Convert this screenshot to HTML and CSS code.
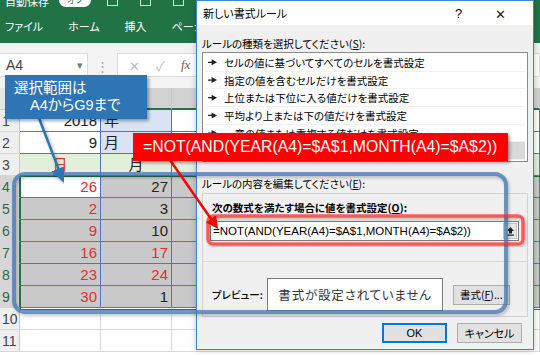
FILE: index.html
```html
<!DOCTYPE html>
<html lang="ja">
<head>
  <meta charset="UTF-8">
  <meta name="viewport" content="width=device-width, initial-scale=1.0">
  <title>新しい書式ルール</title>
  <link rel="stylesheet" href="styles.css">
</head>
<body>
  <div class="excel">
    <div class="title-strip">
      <span class="autosave">自動保存</span>
      <span class="toggle">オフ</span>
      <span class="qa"></span><span class="qa"></span><span class="qa"></span>
    </div>
    <nav class="tabs">
      <span>ファイル</span>
      <span>ホーム</span>
      <span>挿入</span>
      <span>ページレイアウト</span>
    </nav>
    <div class="formula-bar">
      <div class="name-box">A4<span class="caret">▾</span></div>
      <div class="grip">⋮</div>
      <div class="fx-box">
        <span class="fx-btn">✕</span>
        <span class="fx-btn">✓</span>
        <span class="fx">fx</span>
      </div>
    </div>

    <!-- sheet: row header + columns A, B, C -->
    <div class="sheet">
      <div class="hd corner"></div><div class="hd col">A</div><div class="hd col">B</div><div class="hd col">C</div>

      <div class="rh">1</div><div class="c num">2018</div><div class="c yr">年</div><div class="c"></div>
      <div class="rh">2</div><div class="c num">9</div><div class="c yr">月</div><div class="c"></div>
      <div class="rh">3</div><div class="c wk red mid">日</div><div class="c wk mid">月</div><div class="c wk"></div>

      <div class="rh on">4</div><div class="c num red">26</div><div class="c sel num">27</div><div class="c sel"></div>
      <div class="rh on">5</div><div class="c sel num red">2</div><div class="c sel num">3</div><div class="c sel"></div>
      <div class="rh on">6</div><div class="c sel num red">9</div><div class="c sel num">10</div><div class="c sel"></div>
      <div class="rh on">7</div><div class="c sel num red">16</div><div class="c sel num red">17</div><div class="c sel"></div>
      <div class="rh on">8</div><div class="c sel num red">23</div><div class="c sel num red">24</div><div class="c sel"></div>
      <div class="rh on">9</div><div class="c sel num red">30</div><div class="c sel num">1</div><div class="c sel"></div>

      <div class="rh">10</div><div class="c out"></div><div class="c out"></div><div class="c out"></div>
      <div class="rh">11</div><div class="c out"></div><div class="c out"></div><div class="c out"></div>

      <div class="selection"></div>
    </div>
  </div>

  <div class="dialog">
    <div class="dlg-title">
      <span class="dlg-name">新しい書式ルール</span>
      <span class="dlg-help">?</span>
      <span class="dlg-close">✕</span>
    </div>
    <div class="dlg-body">
      <div class="label">ルールの種類を選択してください(<u>S</u>):</div>
      <ul class="rule-list">
        <li><i class="pt"></i>セルの値に基づいてすべてのセルを書式設定</li>
        <li><i class="pt"></i>指定の値を含むセルだけを書式設定</li>
        <li><i class="pt"></i>上位または下位に入る値だけを書式設定</li>
        <li><i class="pt"></i>平均より上または下の値だけを書式設定</li>
        <li><i class="pt"></i>一意の値または重複する値だけを書式設定</li>
        <li class="picked"><i class="pt"></i>数式を使用して、書式設定するセルを決定</li>
      </ul>
      <div class="label second">ルールの内容を編集してください(<u>E</u>):</div>
      <div class="group">
        <div class="group-head">次の数式を満たす場合に値を書式設定(<u>O</u>):</div>
        <div class="formula-input">
          <span class="formula-text">=NOT(AND(YEAR(A4)=$A$1,MONTH(A4)=$A$2))</span>
          <span class="collapse">
            <svg width="9" height="10" viewBox="0 0 9 10"><path d="M4.5 1 L8 5 H6 V7.5 H3 V5 H1 Z" fill="#222"/><rect x="1" y="8.5" width="7" height="1.2" fill="#222"/></svg>
          </span>
        </div>
        <div class="preview-row">
          <span class="preview-label">プレビュー:</span>
          <span class="preview-box">書式が設定されていません</span>
          <span class="btn">書式(<u>F</u>)...</span>
        </div>
      </div>
      <div class="dlg-actions">
        <span class="btn wide default">OK</span>
        <span class="btn wide">キャンセル</span>
      </div>
    </div>
  </div>

  <svg class="marks" width="540" height="355" viewBox="0 0 540 355">
    <defs>
      <filter id="soft" x="-5%" y="-5%" width="110%" height="115%">
        <feDropShadow dx="1.5" dy="2" stdDeviation="1.5" flood-color="#000" flood-opacity="0.3"/>
      </filter>
      <marker id="blueHead" markerWidth="6" markerHeight="6" refX="4" refY="3" orient="auto" markerUnits="strokeWidth">
        <path d="M0 0 L6 3 L0 6 Z" fill="#2e75b6"/>
      </marker>
      <marker id="redHead" markerWidth="5" markerHeight="5" refX="3.5" refY="2.5" orient="auto" markerUnits="strokeWidth">
        <path d="M0 0 L5 2.5 L0 5 Z" fill="#ff0000"/>
      </marker>
    </defs>
    <rect x="14" y="174" width="492" height="138" rx="11" fill="none" stroke="#3f74b5" stroke-opacity="0.72" stroke-width="4" filter="url(#soft)"/>
    <rect x="208" y="216" width="315" height="28" rx="5" fill="none" stroke="#ff2b2b" stroke-opacity="0.72" stroke-width="3.5" filter="url(#soft)"/>
    <line x1="39" y1="118" x2="62" y2="178" stroke="#2e75b6" stroke-width="2.5" marker-end="url(#blueHead)" filter="url(#soft)"/>
    <line x1="170" y1="160" x2="216" y2="226" stroke="#ff0000" stroke-width="2.5" marker-end="url(#redHead)"/>
  </svg>

  <div class="callout blue-note">
    <div>選択範囲は</div>
    <div class="indent">A4からG9まで</div>
  </div>
  <div class="callout red-note">=NOT(AND(YEAR(A4)=$A$1,MONTH(A4)=$A$2))</div>
</body>
</html>
```

FILE: styles.css
```css
/* Page */
body {
  margin: 0;
  width: 540px;
  height: 355px;
  overflow: hidden;
  position: relative;
  font-family: "Noto Sans CJK JP", "Noto Sans", sans-serif;
  font-feature-settings: "palt";
  background: #ffffff;
  color: #000;
}

/* Excel window behind the dialog */
.excel {
  width: 540px;
}

.title-strip {
  height: 12px;
  background: #217346;
  display: flex;
  align-items: flex-end;
  gap: 10px;
  padding-left: 5px;
  overflow: hidden;
  color: #fff;
  font-size: 11px;
}

.autosave {
  line-height: 12px;
  margin-bottom: 5px;
}

.toggle {
  width: 32px;
  height: 14px;
  margin-bottom: 5px;
  border-radius: 7px;
  background: #fff;
  color: #217346;
  font-size: 9px;
  text-align: center;
  line-height: 14px;
}

.qa {
  width: 9px;
  height: 5px;
  margin: 0 6px 6px;
  border: 1px solid #cfe3d7;
  border-top: none;
}

.tabs {
  height: 31px;
  background: #217346;
  display: flex;
  align-items: center;
  gap: 25px;
  padding: 0 0 4px 5px;
  box-sizing: border-box;
  color: #fff;
  font-size: 11px;
  white-space: nowrap;
}

.formula-bar {
  height: 45px;
  background: #f3f3f3;
  display: flex;
  align-items: center;
  padding-bottom: 1px;
  box-sizing: border-box;
}

.name-box {
  width: 88px;
  height: 24px;
  background: #fff;
  border: 1px solid #dcdcdc;
  border-left: none;
  box-sizing: border-box;
  display: flex;
  align-items: center;
  justify-content: space-between;
  padding: 0 4px 0 6px;
  font-family: "Liberation Sans", sans-serif;
  font-size: 14px;
  color: #444;
}

.caret {
  font-size: 11px;
  color: #777;
}

.grip {
  width: 29px;
  text-align: center;
  color: #aaa;
  font-size: 13px;
}

.fx-box {
  flex: 1;
  height: 24px;
  background: #fff;
  border: 1px solid #dcdcdc;
  box-sizing: border-box;
  display: flex;
  align-items: center;
  gap: 16px;
  padding-left: 11px;
  color: #bbb;
  font-size: 13px;
}

.fx {
  font-style: italic;
  color: #666;
  font-family: "Liberation Serif", serif;
}

/* Grid of cells */
.sheet {
  position: relative;
  display: grid;
  grid-template-columns: 20px 81px 71px 1fr;
  grid-auto-rows: 22px;
  font-family: "Liberation Sans", "Noto Sans CJK JP", sans-serif;
  font-size: 15px;
}

.hd {
  background: #e6e6e6;
  border-right: 1px solid #c8c8c8;
  border-bottom: 1px solid #c8c8c8;
  text-align: center;
  font-size: 12px;
  line-height: 21px;
  color: #444;
}

.hd.col {
  background: #d2d2d2;
  border-bottom: 2px solid #217346;
}

.rh {
  background: #efefef;
  border-right: 1px solid #c8c8c8;
  border-bottom: 1px solid #d6d6d6;
  font-size: 14px;
  line-height: 22px;
  padding-left: 2px;
  color: #444;
}

.rh.on {
  background: #d6d6d6;
  color: #2d6a47;
  border-right: 1px solid #217346;
}

.c {
  background: #fff;
  border-right: 1px solid #4f74c0;
  border-bottom: 1px solid #4f74c0;
  line-height: 22px;
  padding: 0 3px;
  color: #222;
  white-space: nowrap;
  overflow: hidden;
}

.c.num { text-align: right; }
.c.mid { text-align: center; }
.c.red { color: #e0302a; }
.c.yr { background: #dae3f3; }
.c.wk { background: #e2efda; }
.c.sel { background: #c9c9c9; }

.c.out {
  border-right-color: #dadada;
  border-bottom-color: #dadada;
}

.selection {
  position: absolute;
  left: 20px;
  top: 88px;
  right: -10px;
  height: 132px;
  border: 1.5px solid #217346;
  pointer-events: none;
}

/* Dialog window */
.dialog {
  position: absolute;
  left: 196px;
  top: 0;
  width: 338px;
  height: 350px;
  box-sizing: border-box;
  border: 1px solid #3a86d6;
  background: #f0f0f0;
  font-size: 10.5px;
  box-shadow: 0 0 6px rgba(0, 0, 0, 0.25);
}

.dlg-title {
  height: 24px;
  background: #fff;
  display: flex;
  align-items: center;
  padding-left: 6px;
  font-size: 11px;
}

.dlg-name { flex: 1; }

.dlg-help {
  width: 40px;
  font-family: "Liberation Sans", sans-serif;
  font-size: 13px;
}

.dlg-close {
  width: 38px;
  font-size: 13px;
  color: #222;
}

.dlg-body {
  padding: 0 5px;
}

.label {
  padding-top: 10px;
  line-height: 17px;
}

.label.second {
  padding-top: 12px;
  line-height: 19px;
}

.rule-list {
  list-style: none;
  margin: 0;
  padding: 1px 2px;
  height: 110px;
  box-sizing: border-box;
  background: #fff;
  border: 1px solid #8a8a8a;
  overflow: hidden;
}

.rule-list li {
  height: 17.7px;
  line-height: 17px;
  border-bottom: 1px solid #f1f1f1;
  box-sizing: border-box;
  display: flex;
  align-items: center;
  gap: 7px;
  padding-left: 3px;
}

.rule-list li.picked {
  background: #d9d9d9;
}

.pt {
  width: 9px;
  height: 6px;
  background: #222;
  clip-path: polygon(0 40%, 40% 40%, 40% 0, 100% 50%, 40% 100%, 40% 60%, 0 60%);
}

.group {
  height: 124px;
  box-sizing: border-box;
  border: 1px solid #d2d2d2;
  padding: 6px 8px 0 9px;
}

.group-head {
  font-weight: bold;
  line-height: 16px;
}

.formula-input {
  margin: 5px 0 0 -2px;
  height: 20px;
  background: #fff;
  border: 1px solid #7a7a7a;
  box-sizing: border-box;
  display: flex;
  align-items: center;
  justify-content: space-between;
  padding-left: 2px;
}

.formula-text {
  font-family: "Liberation Sans", sans-serif;
  font-size: 11.5px;
}

.collapse {
  width: 14px;
  height: 16px;
  margin-right: 1px;
  background: #e6e6e6;
  border: 1px solid #c4c4c4;
  box-sizing: border-box;
  display: flex;
  align-items: center;
  justify-content: center;
}

.preview-row {
  margin: 20px -8px 0 -9px;
  border-top: 1px solid #d8d8d8;
  padding: 16px 0 0 9px;
  display: flex;
  align-items: center;
}

.preview-label {
  width: 55px;
  font-weight: 500;
}

.preview-box {
  width: 176px;
  height: 33px;
  box-sizing: border-box;
  background: #fff;
  border: 1px solid #7a7a7a;
  display: flex;
  align-items: center;
  justify-content: center;
  font-size: 12.5px;
  letter-spacing: 0.8px;
  color: #333;
  margin-right: 10px;
}

.btn {
  height: 20px;
  padding: 0 6px;
  box-sizing: border-box;
  background: #e1e1e1;
  border: 1px solid #adadad;
  display: flex;
  align-items: center;
  justify-content: center;
  white-space: nowrap;
}

.dlg-actions {
  display: flex;
  justify-content: flex-end;
  gap: 10px;
  padding: 6px 6px 0 0;
}

.btn.wide {
  width: 65px;
  font-size: 11px;
}

.btn.default {
  border: 2px solid #0078d7;
  font-family: "Liberation Sans", sans-serif;
}

/* Annotations drawn over the screenshot */
.marks {
  position: absolute;
  left: 0;
  top: 0;
  pointer-events: none;
}

.callout {
  position: absolute;
  color: #fff;
  box-shadow: 2px 2px 3px rgba(0, 0, 0, 0.35);
}

.blue-note {
  left: 5px;
  top: 75px;
  width: 142px;
  height: 44px;
  box-sizing: border-box;
  background: #2e75b6;
  padding: 2px 0 0 9px;
  font-size: 14.5px;
  line-height: 19px;
}

.blue-note .indent {
  padding-left: 16px;
  font-family: "Liberation Sans", "Noto Sans CJK JP", sans-serif;
}

.red-note {
  left: 133px;
  top: 133px;
  width: 375px;
  height: 28px;
  background: #ff0000;
  padding-left: 10px;
  box-sizing: border-box;
  font-family: "Liberation Sans", sans-serif;
  font-size: 15.8px;
  line-height: 28px;
}
```
